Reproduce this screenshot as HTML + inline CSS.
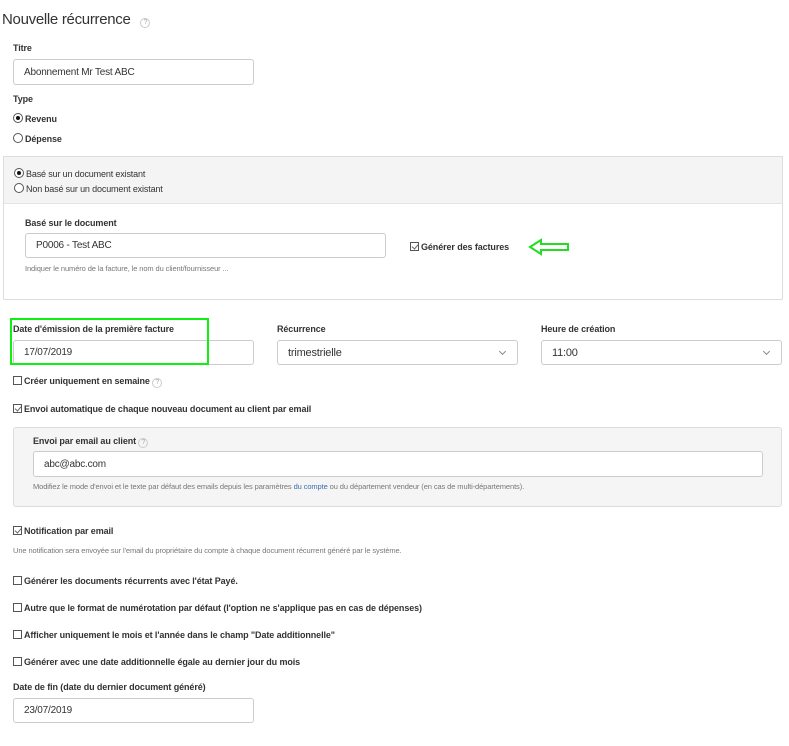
<!DOCTYPE html>
<html><head><meta charset="utf-8"><style>
*{box-sizing:border-box;margin:0;padding:0}
body{width:789px;height:746px;background:#fff;font-family:"Liberation Sans",sans-serif;color:#222;position:relative;overflow:hidden}
.a{position:absolute;white-space:nowrap}
.l{font-size:9px;font-weight:bold;letter-spacing:-0.1px;color:#333}
.in{position:absolute;border:1px solid #ccc;border-radius:3px;background:#fff;font-size:10px;color:#333;padding-left:10px;display:flex;align-items:center;letter-spacing:-0.2px}
.cb{display:inline-block;width:9px;height:9px;border:1px solid #555;vertical-align:-1px;margin-right:2px;background:#fff;position:relative}
.cb.k::after{content:"";position:absolute;left:2px;top:0px;width:3px;height:5px;border:solid #666;border-width:0 1px 1px 0;transform:rotate(40deg)}
.rd{display:inline-block;width:10px;height:10px;border:1px solid #555;border-radius:50%;vertical-align:-1px;margin-right:2px;position:relative;background:#fff}
.rd.k::after{content:"";position:absolute;left:2px;top:2px;width:4px;height:4px;border-radius:50%;background:#111}
.q{display:inline-block;width:10px;height:10px;border:1px solid #ccc;border-radius:50%;font-size:7px;color:#aaa;text-align:center;line-height:8px;font-weight:normal;vertical-align:0}
.s{font-size:7.5px;color:#777;letter-spacing:-0.1px}
.chev{position:absolute;right:12px;top:8px;width:5px;height:5px;border:solid #888;border-width:0 1px 1px 0;transform:rotate(45deg)}
</style></head><body>
<div class="a" style="left:2px;top:11px;font-size:15px;color:#333;letter-spacing:-0.3px">Nouvelle récurrence <span class="q" style="margin-left:6px">?</span></div>
<div class="a l" style="left:13px;top:43px">Titre</div>
<div class="in" style="left:13px;top:59px;width:241px;height:26px">Abonnement Mr Test ABC</div>
<div class="a l" style="left:13px;top:94px">Type</div>
<div class="a l" style="left:13px;top:113px"><span class="rd k"></span>Revenu</div>
<div class="a l" style="left:13px;top:133px"><span class="rd"></span>Dépense</div>

<div class="a" style="left:3px;top:156px;width:780px;height:144px;border:1px solid #ddd;border-radius:2px;background:#fff"></div>
<div class="a" style="left:3px;top:156px;width:780px;height:48px;background:#f4f4f4;border:1px solid #ddd;border-bottom:1px solid #e4e4e4"></div>
<div class="a" style="left:14px;top:168px;font-size:9px;letter-spacing:-0.15px;color:#333"><span class="rd k"></span>Basé sur un document existant</div>
<div class="a" style="left:14px;top:183px;font-size:9px;letter-spacing:-0.15px;color:#333"><span class="rd"></span>Non basé sur un document existant</div>
<div class="a l" style="left:25px;top:218px">Basé sur le document</div>
<div class="in" style="left:25px;top:233px;width:361px;height:25px">P0006 - Test ABC</div>
<div class="a s" style="left:25px;top:264px">Indiquer le numéro de la facture, le nom du client/fournisseur ...</div>
<div class="a l" style="left:410px;top:242px"><span class="cb k"></span>Générer des factures</div>
<svg class="a" style="left:527px;top:237px" width="46" height="20"><path d="M3 10 L14 3 L14 7 L41 7 L41 13 L14 13 L14 17 Z" fill="none" stroke="#2d2" stroke-width="2"/></svg>

<div class="a l" style="left:13px;top:324px">Date d'émission de la première facture</div>
<div class="in" style="left:13px;top:340px;width:241px;height:25px">17/07/2019</div>
<div class="a" style="left:10px;top:318px;width:199px;height:47px;border:2px solid #1e1"></div>
<div class="a l" style="left:277px;top:324px">Récurrence</div>
<div class="in" style="left:277px;top:340px;width:241px;height:25px;font-size:11px">trimestrielle<span class="chev"></span></div>
<div class="a l" style="left:541px;top:324px">Heure de création</div>
<div class="in" style="left:541px;top:340px;width:241px;height:25px;font-size:11px">11:00<span class="chev"></span></div>

<div class="a l" style="left:13px;top:376px"><span class="cb"></span>Créer uniquement en semaine <span class="q">?</span></div>
<div class="a l" style="left:13px;top:404px"><span class="cb k"></span>Envoi automatique de chaque nouveau document au client par email</div>
<div class="a" style="left:13px;top:427px;width:769px;height:80px;background:#f5f5f5;border:1px solid #ddd;border-radius:3px"></div>
<div class="a l" style="left:33px;top:436px">Envoi par email au client <span class="q">?</span></div>
<div class="in" style="left:33px;top:451px;width:730px;height:26px">abc@abc.com</div>
<div class="a s" style="left:33px;top:482px">Modifiez le mode d'envoi et le texte par défaut des emails depuis les paramètres <span style="color:#3a6fb0">du compte</span> ou du département vendeur (en cas de multi-départements).</div>

<div class="a l" style="left:13px;top:526px"><span class="cb k"></span>Notification par email</div>
<div class="a s" style="left:13px;top:546px">Une notification sera envoyée sur l'email du propriétaire du compte à chaque document récurrent généré par le système.</div>
<div class="a l" style="left:13px;top:576px"><span class="cb"></span>Générer les documents récurrents avec l'état Payé.</div>
<div class="a l" style="left:13px;top:603px"><span class="cb"></span>Autre que le format de numérotation par défaut (l'option ne s'applique pas en cas de dépenses)</div>
<div class="a l" style="left:13px;top:630px"><span class="cb"></span>Afficher uniquement le mois et l'année dans le champ "Date additionnelle"</div>
<div class="a l" style="left:13px;top:657px"><span class="cb"></span>Générer avec une date additionnelle égale au dernier jour du mois</div>
<div class="a l" style="left:13px;top:682px">Date de fin (date du dernier document généré)</div>
<div class="in" style="left:13px;top:698px;width:241px;height:25px">23/07/2019</div>
</body></html>
